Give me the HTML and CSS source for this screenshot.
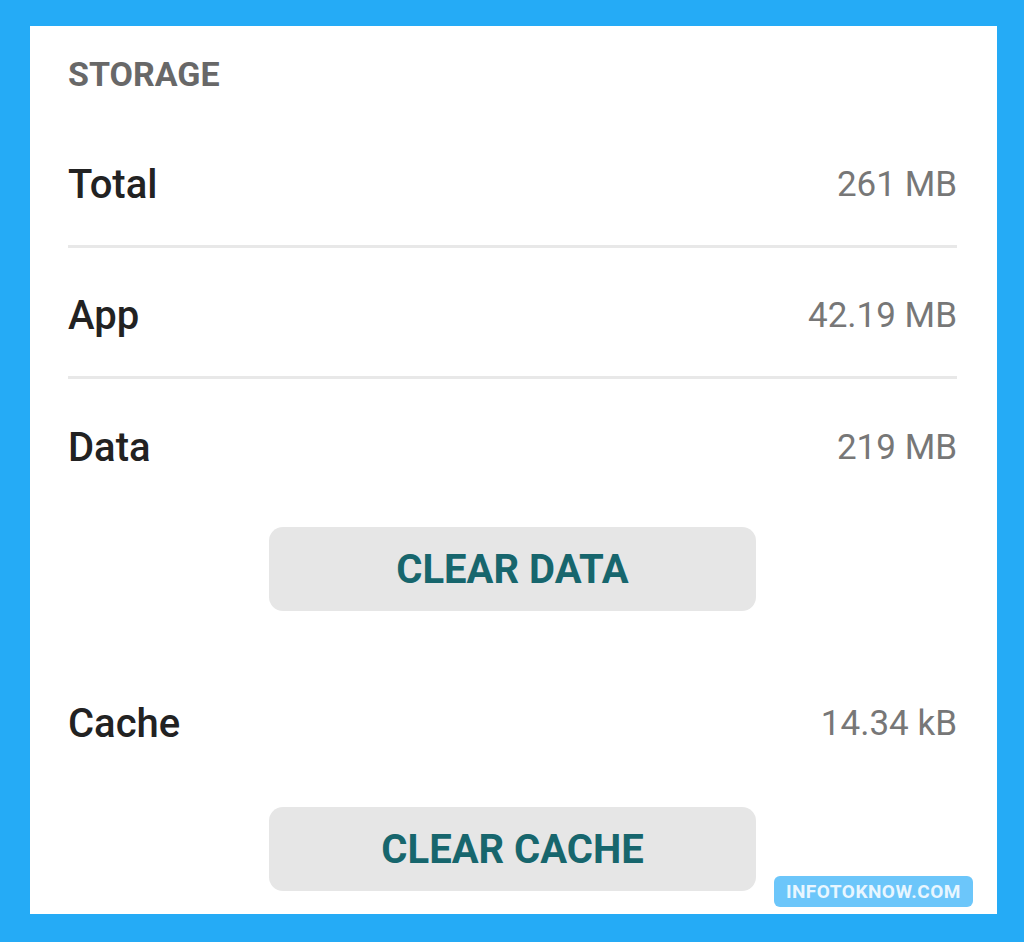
FILE: index.html
```html
<!DOCTYPE html>
<html lang="en">
<head>
    <meta charset="UTF-8">
    <title>Storage</title>
    <link rel="stylesheet" href="styles.css">
</head>
<body>
    <div class="storage-card">
        <h3 class="section-title">STORAGE</h3>

        <div class="row divided">
            <span class="label">Total</span>
            <span class="value">261 MB</span>
        </div>
        <div class="row divided">
            <span class="label">App</span>
            <span class="value">42.19 MB</span>
        </div>
        <div class="row">
            <span class="label">Data</span>
            <span class="value">219 MB</span>
        </div>
        <div class="action">
            <button>CLEAR DATA</button>
        </div>

        <div class="row cache">
            <span class="label">Cache</span>
            <span class="value">14.34 kB</span>
        </div>
        <div class="action last">
            <button>CLEAR CACHE</button>
        </div>

        <span class="watermark">INFOTOKNOW.COM</span>
    </div>
</body>
</html>
```

FILE: styles.css
```css
body {
    margin: 0;
    padding: 26px 27px 28px 30px;
    background-color: #25abf6;
    font-family: Roboto, "Liberation Sans", sans-serif;
}
.storage-card {
    position: relative;
    box-sizing: border-box;
    height: 888px;
    background: white;
    padding: 30px 40px 0 38px;
}
.section-title {
    margin: 0 0 25px;
    font-size: 34px;
    font-weight: 700;
    line-height: 36px;
    color: #686868;
}
.row {
    display: flex;
    justify-content: space-between;
    align-items: center;
    height: 131px;
    padding-top: 6px;
    box-sizing: border-box;
}
.row.divided {
    border-bottom: 3px solid #e8e8e8;
}
.label {
    font-size: 40px;
    font-weight: 500;
    color: #222;
}
.value {
    font-size: 35px;
    color: #777;
}
.action {
    display: flex;
    justify-content: center;
    margin-top: 17px;
}
.action.last {
    margin-top: 21px;
}
button {
    width: 487px;
    height: 84px;
    border: none;
    border-radius: 14px;
    background-color: #e6e6e6;
    color: #17666d;
    font-family: Roboto, "Liberation Sans", sans-serif;
    font-size: 40px;
    font-weight: 700;
}
.row.cache {
    margin-top: 44px;
}
.watermark {
    position: absolute;
    right: 24px;
    bottom: 7px;
    padding: 4px 12px;
    border-radius: 6px;
    background-color: #6cc6fa;
    color: #e8f6ff;
    font-size: 19px;
    font-weight: 700;
    letter-spacing: 0.5px;
}
```
